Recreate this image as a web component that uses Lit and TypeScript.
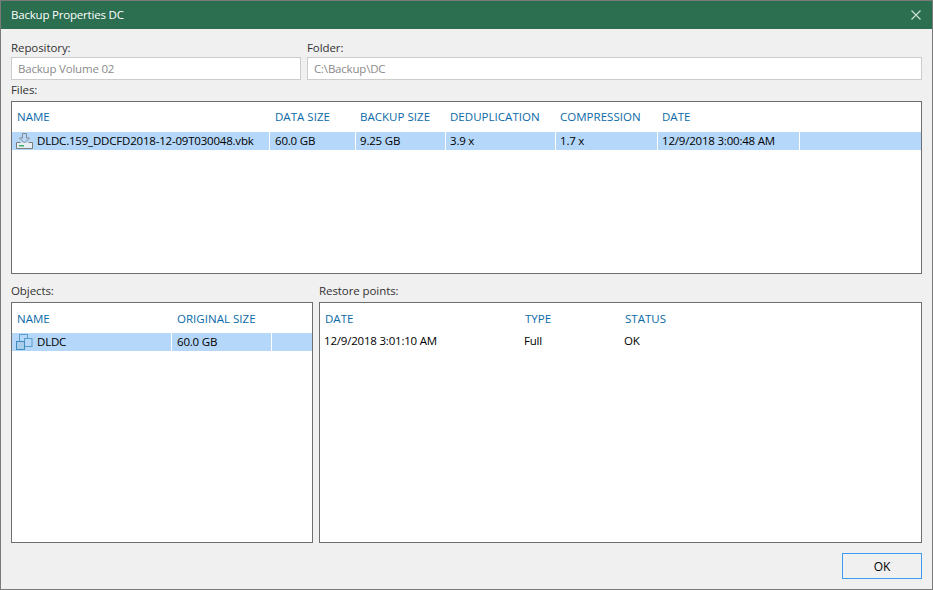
import { LitElement, html, css } from "lit";
import { customElement } from "lit/decorators.js";

const fileCols = [258, 86, 90, 110, 102, 142, 122];
const fileHead = [258, 85, 90, 110, 102, 142];
const objCols = [160, 100, 40];

@customElement("app-root")
export class AppRoot extends LitElement {
  static styles = css`
    :host { display: block; width: 933px; height: 590px; font-family: "Open Sans", "Noto Sans", sans-serif; font-size: 11.5px; color: #000; }
    .win { box-sizing: border-box; width: 933px; height: 590px; border: 1px solid #7a7a7a; background: #f0f0f0; display: flex; flex-direction: column; }
    .title { box-sizing: border-box; height: 28px; flex: none; background: #2b6e50; color: #fff; display: flex; align-items: center; justify-content: space-between; padding: 0 10px 2px 10px; font-size: 11.5px; letter-spacing: -.2px; }
    .title svg { display: block; margin-top: 2px; }
    .body { flex: 1; padding: 0 10px; display: flex; flex-direction: column; }
    .label { color: #333; height: 16px; line-height: 16px; letter-spacing: -.08px; }
    .top { display: grid; grid-template-columns: 290px 615px; column-gap: 6px; padding-top: 11px; }
    .field { box-sizing: border-box; height: 23px; margin-top: 1px; border: 1px solid #ccc; background: #fff; color: #8a8a8a; line-height: 21px; padding-left: 6px; letter-spacing: -.2px; }
    .files-label { margin-top: 2px; }
    .panel { box-sizing: border-box; border: 1px solid #6e6e6e; background: #fff; overflow: hidden; margin-top: 3px; }
    .files { height: 173px; }
    .bottom { display: grid; grid-template-columns: 302px 603px; column-gap: 6px; margin-top: 9px; }
    .lists { height: 241px; }
    .row { display: flex; }
    .head { box-sizing: border-box; height: 30px; align-items: center; color: #0a6aa8; letter-spacing: .03px; }
    .files .head { padding-bottom: 2px; }
    .head > div { box-sizing: border-box; padding-left: 5px; white-space: nowrap; }
    .data { height: 18px; align-items: stretch; line-height: 17px; letter-spacing: -.2px; }
    .data > div { box-sizing: border-box; padding: 0 0 2px 5px; white-space: nowrap; display: flex; align-items: center; gap: 3px; }
    .data > div:nth-child(n+3) { padding-left: 4px; }
    .sel > div { background: #b5d7f9; border-right: 1px solid #fff; }
    .sel > div:last-child { border-right: 0; flex: 1; }
    .data.plain { margin-top: -1px; }
    .data.plain > div { padding-left: 4px; }
    .icon { flex: none; display: block; margin: 1px 0 -2px -1px; align-self: flex-start; }
    .actions { display: flex; justify-content: flex-end; margin-top: 10px; }
    .ok { box-sizing: border-box; width: 80px; height: 26px; border: 1px solid #3c9cf0; background: #f0f0f0; display: flex; align-items: center; justify-content: center; font-size: 12px; }
  `;

  private w(n: number) { return `width:${n}px`; }

  render() {
    const fh = ["NAME", "DATA SIZE", "BACKUP SIZE", "DEDUPLICATION", "COMPRESSION", "DATE"];
    const fd = ["60.0 GB", "9.25 GB", "3.9 x", "1.7 x", "12/9/2018 3:00:48 AM"];
    return html`
      <div class="win">
        <div class="title">
          <span>Backup Properties DC</span>
          <svg width="12" height="12" viewBox="0 0 12 12"><path d="M1.500 1.500l9 9M10.500 1.500l-9 9" stroke="#cfe0d8" stroke-width="1.100" fill="none"/></svg>
        </div>
        <div class="body">
          <div class="top">
            <div><div class="label">Repository:</div><div class="field">Backup Volume 02</div></div>
            <div><div class="label">Folder:</div><div class="field">C:\\Backup\\DC</div></div>
          </div>
          <div class="label files-label">Files:</div>
          <div class="panel files">
            <div class="row head">${fh.map((t, i) => html`<div style=${this.w(fileHead[i])}>${t}</div>`)}</div>
            <div class="row data sel">
              <div style=${this.w(fileCols[0])}>
                <svg class="icon" width="18" height="17" viewBox="0 0 18 17" fill="none">
                  <path d="M4.500 9.500H.5v6h16v-6H12.500" stroke="#7d7d7d" fill="#e6eef4"/>
                  <path d="M6.500 .5h4v4.500h3L8.500 10 3.500 5h3z" stroke="#8a8a8a" fill="#b5d7f9"/>
                  <rect x="3" y="12" width="5" height="1.500" fill="#3fae6b"/>
                </svg>
                <span>DLDC.159_DDCFD2018-12-09T030048.vbk</span>
              </div>
              ${fd.map((t, i) => html`<div style=${this.w(fileCols[i + 1])}>${t}</div>`)}
              <div></div>
            </div>
          </div>
          <div class="bottom">
            <div>
              <div class="label">Objects:</div>
              <div class="panel lists">
                <div class="row head">
                  <div style=${this.w(160)}>NAME</div><div style=${this.w(100)}>ORIGINAL SIZE</div>
                </div>
                <div class="row data sel">
                  <div style=${this.w(objCols[0])}>
                    <svg class="icon" width="18" height="17" viewBox="0 0 18 17" fill="none">
                      <path d="M3.500 7V.5h8v4" stroke="#5a9cc8"/>
                      <rect x="8.500" y="4.500" width="7.500" height="8" stroke="#5a9cc8"/>
                      <rect x=".5" y="7.500" width="8" height="8" stroke="#3f8cc0" fill="#a8cdea"/>
                    </svg>
                    <span>DLDC</span>
                  </div>
                  <div style=${this.w(objCols[1])}>60.0 GB</div>
                  <div></div>
                </div>
              </div>
            </div>
            <div>
              <div class="label">Restore points:</div>
              <div class="panel lists">
                <div class="row head">
                  <div style=${this.w(200)}>DATE</div><div style=${this.w(100)}>TYPE</div><div style=${this.w(100)}>STATUS</div>
                </div>
                <div class="row data plain">
                  <div style=${this.w(200)}>12/9/2018 3:01:10 AM</div><div style=${this.w(100)}>Full</div><div style=${this.w(100)}>OK</div>
                </div>
              </div>
            </div>
          </div>
          <div class="actions"><div class="ok">OK</div></div>
        </div>
      </div>
    `;
  }
}
